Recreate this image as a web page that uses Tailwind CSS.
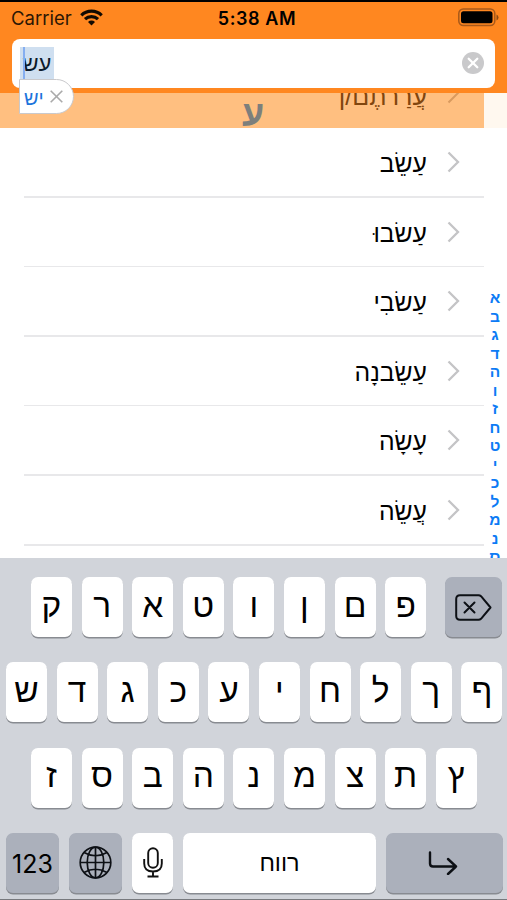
<!DOCTYPE html>
<html lang="he">
<head>
<meta charset="utf-8">
<title>Verb index</title>
<script src="https://cdn.jsdelivr.net/npm/@tailwindcss/browser@4"></script>
</head>
<body class="w-[507px] h-[900px] overflow-hidden bg-white font-['Liberation_Sans','Open_Sans',sans-serif] text-black">
<main class="relative w-[507px] h-[900px] overflow-hidden flex flex-col">
  <header class="relative z-10 h-[93px] shrink-0 bg-[#ff8720] border-t-2 border-black">
    <div class="h-[37px] grid grid-cols-3 items-center pl-[11px] pr-[8px] pb-[4px] font-[Inter,sans-serif]">
      <div class="flex items-center gap-[8px] text-[18.5px] text-[#2b1604]">Carrier
        <svg class="w-[23px] h-[17px] mb-[2px]" viewBox="0 0 23 17"><g fill="none" stroke="#120a02" stroke-width="3.2"><path d="M1.3 6.3a14.6 14.6 0 0 1 20.4 0"/><path d="M5 10.2a9.4 9.4 0 0 1 13 0"/></g><path d="M11.500 16.500l-3.500-3.500a5 5 0 0 1 7 0z" fill="#120a02"/></svg>
      </div>
      <div class="text-center text-[18px] font-semibold tracking-[0.600px] pl-[4px] whitespace-nowrap">5:38 AM</div>
      <svg class="justify-self-end w-[41px] h-[19px] mb-[2px]" viewBox="0 0 41 19"><rect x=".8" y="1" width="36" height="16.500" rx="4.500" fill="none" stroke="#a8591a" stroke-width="1.500"/><rect x="3" y="3.300" width="31.500" height="12" rx="2.500"/><path d="M38.500 6.500q2 1 2 3t-2 3z" fill="#8b4a12"/></svg>
    </div>
    <div class="mx-[12px] h-[49px] rounded-[8px] bg-white flex items-center justify-between pl-[8px] pr-[11px]">
      <div class="h-[32px] w-[34px] mb-[1px] bg-[#cfdff0] text-[22px] leading-[36px] text-[#0b1a2b] flex items-center justify-center relative"><span class="pt-[2px]">עש</span><i class="absolute left-[3px] top-0 w-[2px] h-[32px] bg-[#85aef0]"></i></div>
      <svg class="w-[22px] h-[22px] mb-[2px]" viewBox="0 0 22 22"><circle cx="11" cy="11" r="11" fill="#c9c9cb"/><path d="M6.700 6.700l8.600 8.600M15.300 6.700l-8.600 8.600" stroke="#fff" stroke-width="2.300" stroke-linecap="round"/></svg>
    </div>
    <div class="absolute left-[19px] top-[77px] w-[55px] h-[35px] bg-white border border-[#c9c9cc] rounded-r-full flex items-center pl-[4px] gap-[6px] text-[20px] leading-none text-[#1d74dc]"><span class="pt-[2px]">יש</span>
      <svg class="w-[13px] h-[13px]" viewBox="0 0 13 13"><path d="M.7.7l11.600 11.600M12.300.7L.7 12.300" stroke="#aaa" stroke-width="1.600"/></svg>
    </div>
  </header>
  <section class="relative h-[465px] shrink-0 overflow-hidden flex">
    <div class="w-[484px] flex flex-col">
      <div class="relative h-[35px] shrink-0 bg-[#ffbf80]">
        <div dir="rtl" class="absolute right-[57px] top-[-15px] text-[25px] leading-[36px] text-[#81460e]">עֲרַרתֶם/ן</div>
        <svg class="absolute right-[24px] top-[-11px] w-[13px] h-[22px]" viewBox="0 0 13 22"><path d="M1.500 1.500L11 11l-9.500 9.500" fill="none" stroke="#d99a5e" stroke-width="2"/></svg>
        <div class="absolute left-[242px] top-[4px] text-[36px] leading-[34px] font-bold text-[#7d7f7c]">ע</div>
      </div>
      <ul id="rows" dir="rtl"></ul>
    </div>
    <nav class="relative w-[23px] pt-[196px] text-[#0c7bf5] text-[15.500px] font-bold text-center">
      <div class="absolute inset-x-0 top-0 h-[35px] bg-[#fff8ef]"></div>
      <div id="index" class="pr-[1px]"></div>
    </nav>
  </section>
  <section id="keys" class="relative h-[342px] shrink-0 bg-[#d1d4da] border-b border-[#77797d] pt-[19px] flex flex-col gap-[25.300px] text-[33.500px]"></section>
</main>
<template id="bottom">
  <div class="flex h-[60px] pl-[6px] gap-[10px] leading-none">
    <div class="w-[53px] rounded-[7px] bg-[#abb0bb] shadow-[0_1.500px_0_#888b91] flex items-center justify-center pt-[3px] text-[25px] font-[Inter,sans-serif]">123</div>
    <div class="w-[53px] rounded-[7px] bg-[#abb0bb] shadow-[0_1.500px_0_#888b91] flex items-center justify-center"><svg class="w-[33px] h-[33px]" viewBox="0 0 33 33" fill="none" stroke="#0d1015" stroke-width="1.700"><circle cx="16.500" cy="16.500" r="15.300"/><ellipse cx="16.500" cy="16.500" rx="8.300" ry="15.300"/><path d="M16.500 1v31M1 16.500h31M5 6.500q11.500 6.500 23 0M5 26.500q11.500-6.500 23 0"/></svg></div>
    <div class="w-[41px] rounded-[7px] bg-white shadow-[0_1.500px_0_#888b91] flex items-center justify-center"><svg class="w-[20px] h-[31px]" viewBox="0 0 20 31" fill="none" stroke="#111" stroke-width="1.900"><rect x="5.200" y="1.200" width="9.600" height="19.600" rx="4.800"/><path d="M1.200 12v4.500q0 8 8.800 8t8.800-8V12M10 24.500V29M4.500 29.500h11"/></svg></div>
    <div class="w-[193px] rounded-[7px] bg-white shadow-[0_1.500px_0_#888b91] flex items-center justify-center pt-[2px] text-[23.500px]">רווח</div>
    <div class="w-[117px] rounded-[7px] bg-[#abb0bb] shadow-[0_1.500px_0_#888b91] flex items-center justify-center"><svg class="w-[30px] h-[24px] mr-[3px]" viewBox="0 0 30 24" fill="none" stroke="#0d1015" stroke-width="2.400" stroke-linecap="round" stroke-linejoin="round"><path d="M2 1.500v11q0 3 3 3h23M20 8l8 7.500-8 7.500"/></svg></div>
  </div>
</template>
<script>
document.getElementById('rows').innerHTML = ['עַשֵׂב','עַשׂבוּ','עַשׂבִי','עַשֵׂבנָה','עָשָׂה','עֲשֵׂה',''].map(t =>
  `<li class="h-[69.600px] flex flex-col"><div class="flex-1 flex items-center pr-[24px] gap-[20px]"><svg class="w-[13px] h-[22px]" viewBox="0 0 13 22"><path d="M1.500 1.500L11 11l-9.500 9.500" fill="none" stroke="#c4c4c6" stroke-width="2.300"/></svg><span class="text-[24.700px] leading-[36px] pt-[4px]">${t}</span></div><div class="h-[1.500px] bg-[#e8e8ea] w-[460px]"></div></li>`).join('');
document.getElementById('index').innerHTML = [...'אבגדהוזחטיכלמנס'].map(c => `<div class="h-[18.500px] leading-[18.500px]">${c}</div>`).join('');
const key = c => `<div class="w-[41px] h-[60px] rounded-[7px] bg-white shadow-[0_1.500px_0_#888b91] flex items-center justify-center leading-none pb-[3px]">${c}</div>`;
const del = `<div class="w-[57px] ml-[9px] rounded-[7px] bg-[#abb0bb] shadow-[0_1.500px_0_#888b91] flex items-center justify-center"><svg class="w-[37px] h-[27px]" viewBox="0 0 37 27" fill="none" stroke="#0d1015" stroke-width="2" stroke-linejoin="round" stroke-linecap="round"><path d="M5 1.200h18.500q1.500 0 2.500 1L35.500 13.500 26 24.800q-1 1-2.500 1H5q-3.800 0-3.800-3.800V5q0-3.800 3.800-3.800zM9.500 8.500l10 10M19.500 8.500l-10 10"/></svg></div>`;
document.getElementById('keys').innerHTML =
  `<div class="flex h-[60px] gap-[9.600px] pl-[31px]">${[...'קראטוןםפ'].map(key).join('')}${del}</div>` +
  `<div class="flex h-[60px] gap-[9.600px] pl-[6px]">${[...'שדגכעיחלךף'].map(key).join('')}</div>` +
  `<div class="flex h-[60px] gap-[9.600px] pl-[31px]">${[...'זסבהנמצתץ'].map(key).join('')}</div>` +
  document.getElementById('bottom').innerHTML;
</script>
</body>
</html>
